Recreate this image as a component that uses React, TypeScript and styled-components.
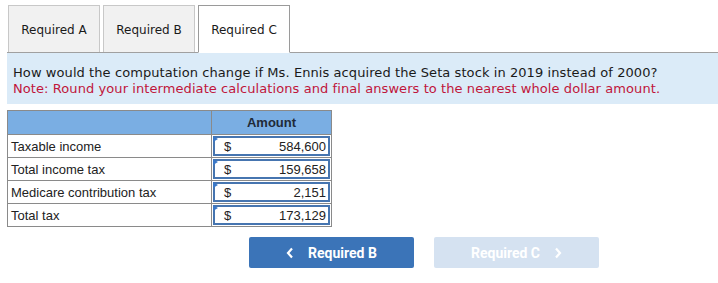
import React from "react";
import styled, { createGlobalStyle } from "styled-components";

const Global = createGlobalStyle`
  html, body { margin: 0; padding: 0; background: #fff; }
  body { width: 718px; height: 283px; overflow: hidden; }
`;

const Page = styled.div`
  padding: 5px 0 0 7px;
  font-family: "DejaVu Sans", sans-serif;
`;

const TabBar = styled.div`
  display: flex;
  gap: 3px;
  padding-left: 1px;
  border-bottom: 1px solid #a0a0a0;
  height: 47px;
`;

const Tab = styled.div<{ $active?: boolean }>`
  width: 92px;
  box-sizing: border-box;
  border: 1px solid ${(p) => (p.$active ? "#9a9a9a" : "#c8c8c8")};
  border-bottom: ${(p) => (p.$active ? "1px solid #fff" : "none")};
  background: ${(p) => (p.$active ? "#fff" : "#f1f1f1")};
  display: flex;
  align-items: center;
  justify-content: center;
  padding-top: 2px;
  font-size: 12px;
  color: #1a1a1a;
  margin-bottom: ${(p) => (p.$active ? "-1px" : "0")};
  height: ${(p) => (p.$active ? "48px" : "47px")};
`;

const Prompt = styled.div`
  background: #dbebf8;
  height: 51px;
  box-sizing: border-box;
  padding: 12px 0 0 6px;
  font-size: 13px;
  line-height: 16px;
  letter-spacing: 0.08px;
  color: #1a1a1a;
`;

const Note = styled.div`
  color: #c0163b;
`;

const Table = styled.table`
  margin-top: 6px;
  border-collapse: collapse;
  font-family: "Liberation Sans", Arial, sans-serif;
  font-size: 13px;
  color: #222;
`;

const HeadCell = styled.th`
  background: #7aaee3;
  border: 1px solid #8a8a8a;
  height: 23px;
  padding: 0;
  font-size: 13px;
  font-weight: bold;
  color: #1f2a38;
  text-align: center;
`;

const LabelCell = styled.td`
  border: 1px solid #8a8a8a;
  width: 204px;
  height: 23px;
  padding: 0 0 0 3px;
  box-sizing: border-box;
`;

const ValueCell = styled.td`
  border: 1px solid #8a8a8a;
  width: 120px;
  padding: 1px;
  height: 23px;
  box-sizing: border-box;
`;

const InputBox = styled.div`
  position: relative;
  height: 20px;
  border: 2px solid #4675b0;
  box-sizing: border-box;
  display: flex;
  align-items: center;
  justify-content: space-between;
  padding: 0 2px 0 9px;
  background: #fff;
`;

const Corner = styled.span`
  position: absolute;
  left: -2px;
  top: -2px;
  width: 0;
  height: 0;
  border-top: 3px solid transparent;
  border-bottom: 3px solid transparent;
  border-left: 5px solid #3a78c8;
`;

const Buttons = styled.div`
  display: flex;
  gap: 20px;
  margin: 10px 0 0 242px;
`;

const NavButton = styled.div<{ $disabled?: boolean }>`
  width: 165px;
  height: 31px;
  border-radius: 2px;
  background: ${(p) => (p.$disabled ? "#d5e2f1" : "#3b74b8")};
  color: #fff;
  font-family: Roboto, "Liberation Sans", sans-serif;
  font-weight: bold;
  font-size: 14px;
  display: flex;
  align-items: center;
  justify-content: center;
  gap: 14px;
`;

const Chevron = ({ dir }: { dir: "left" | "right" }) => (
  <svg width="8" height="12" viewBox="0 0 8 12">
    <path
      d={dir === "left" ? "M6 1.5 L2 6 L6 10.5" : "M2 1.5 L6 6 L2 10.5"}
      fill="none"
      stroke="#fff"
      strokeWidth="2.2"
    />
  </svg>
);

const rows = [
  ["Taxable income", "584,600"],
  ["Total income tax", "159,658"],
  ["Medicare contribution tax", "2,151"],
  ["Total tax", "173,129"],
];

export default function App() {
  return (
    <>
      <Global />
      <Page>
        <TabBar>
          <Tab>Required A</Tab>
          <Tab>Required B</Tab>
          <Tab $active>Required C</Tab>
        </TabBar>
        <Prompt>
          <div>How would the computation change if Ms. Ennis acquired the Seta stock in 2019 instead of 2000?</div>
          <Note>Note: Round your intermediate calculations and final answers to the nearest whole dollar amount.</Note>
        </Prompt>
        <Table>
          <thead>
            <tr>
              <HeadCell />
              <HeadCell>Amount</HeadCell>
            </tr>
          </thead>
          <tbody>
            {rows.map(([label, value]) => (
              <tr key={label}>
                <LabelCell>{label}</LabelCell>
                <ValueCell>
                  <InputBox>
                    <Corner />
                    <span>$</span>
                    <span>{value}</span>
                  </InputBox>
                </ValueCell>
              </tr>
            ))}
          </tbody>
        </Table>
        <Buttons>
          <NavButton>
            <Chevron dir="left" />
            Required B
          </NavButton>
          <NavButton $disabled>
            Required C
            <Chevron dir="right" />
          </NavButton>
        </Buttons>
      </Page>
    </>
  );
}
